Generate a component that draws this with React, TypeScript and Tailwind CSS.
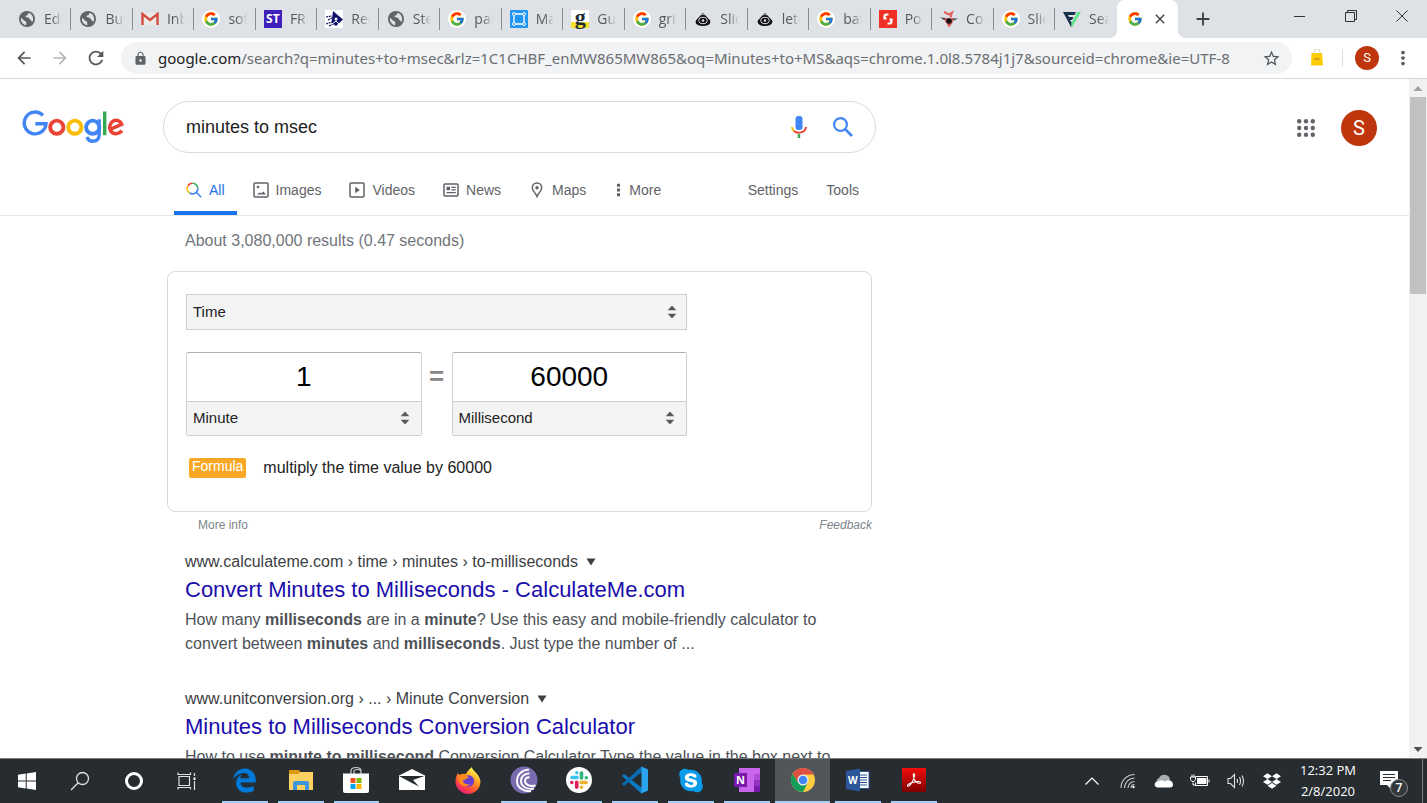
import React from "react";
import { FcGoogle } from "react-icons/fc";
import { FaDropbox, FaEdgeLegacy, FaSkype } from "react-icons/fa";
import { MdLock, MdStarBorder, MdRefresh, MdArrowBack, MdArrowForward, MdMoreVert, MdClose, MdAdd } from "react-icons/md";

const ui = "font-['Open_Sans','Noto_Sans',sans-serif]";

/* ---------- favicons ---------- */

const Globe = () => (
  <svg viewBox="0 0 16 16" className="size-4">
    <circle cx="8" cy="8" r="8" fill="#5f6368" />
    <path d="M2 6.800l2.600 2.200c.5 1.300 2 1 2.500 1.800.4.800-.2 2 .3 3.400C4 14 1.300 10.500 2 6.800z" fill="#dee1e6" />
    <path d="M9.600 2c-1 .6-.3 1.700-1.500 2.200-1 .2-1.700.2-1.600 1.400.1 1 2 .9 3 1.200 1.300.4 1.200 2 2.300 2.500.9.400 1.200 1.300 1 2.300 1.600-2 1.900-5 .3-7.200C12.200 3.200 11 2.300 9.600 2z" fill="#dee1e6" />
  </svg>
);

const GoogleG = () => (
  <span className="flex size-[18px] items-center justify-center rounded-full bg-white">
    <FcGoogle className="size-4" />
  </span>
);

const Gmail = () => (
  <svg viewBox="0 0 18 14" className="h-[14px] w-[18px]">
    <path d="M1 1h16v12H1z" fill="#e9e9e9" />
    <path d="M1.500 13V2L9 8l7.500-6v11" fill="none" stroke="#d54b3d" strokeWidth="2.400" />
  </svg>
);

const St = () => (
  <span className="flex size-[18px] items-center justify-center bg-[#3f20ba] text-[12px] leading-none font-bold text-white">ST</span>
);

const Diamond = () => (
  <svg viewBox="0 0 18 18" className="size-[18px]">
    <path d="M0 0h18v18H0z" fill="#fff" />
    <path d="M8 1l10 8.500L11 16 6.500 13z" fill="#11116b" />
    <path d="M1 7l6-1M3 10l4-2M1 14l6-2M4 16l4-2" stroke="#11116b" strokeWidth="1.200" strokeDasharray="2 .8" />
    <circle cx="11" cy="9" r="1.500" fill="#fff" />
    <path d="M7 14l4-3 3 3" stroke="#fff" fill="none" />
  </svg>
);

const Marquee = () => (
  <svg viewBox="0 0 18 18" className="size-[18px]">
    <rect width="18" height="18" rx="1" fill="#2196f3" />
    <path d="M4 4h10v10H4z" fill="none" stroke="#fff" strokeWidth="1.300" />
    <g fill="#2196f3" stroke="#fff">
      <circle cx="4" cy="4" r="1.500" />
      <circle cx="14" cy="4" r="1.500" />
      <circle cx="4" cy="14" r="1.500" />
      <circle cx="14" cy="14" r="1.500" />
    </g>
  </svg>
);

const Guru = () => (
  <span className="flex size-[18px] items-center justify-center bg-linear-to-b from-white from-65% to-[#f5e02a] to-65% pb-1 font-['Liberation_Serif',serif] text-[22px] leading-none font-bold text-[#222c35]">
    g
  </span>
);

const Eye = () => (
  <svg viewBox="0 0 18 18" className="size-[18px]">
    <path d="M9 4.500L3 11c-1.500 5 13.500 5 12 0z" fill="#111" stroke="#111" strokeWidth="2.500" strokeLinejoin="round" />
    <ellipse cx="9" cy="10.500" rx="4.200" ry="3.200" fill="none" stroke="#dee1e6" />
    <circle cx="9" cy="10.500" r="1.200" fill="#dee1e6" />
    <path d="M7 5q2-1.500 4 0" fill="none" stroke="#dee1e6" strokeWidth=".7" />
  </svg>
);

const RedTile = () => (
  <svg viewBox="0 0 18 18" className="size-[18px]">
    <path d="M0 0h18v18H0z" fill="#ef3124" />
    <path d="M9.500 4.500H7.500A2 2 0 0 0 5.500 6.500V8.300h2M8.500 13.500h2a2 2 0 0 0 2-2V9.700h-2" fill="none" stroke="#fff" strokeWidth="2.200" />
  </svg>
);

const Ninja = () => (
  <svg viewBox="0 0 18 18" className="size-[18px]">
    <path d="M3 8l11 .5-2 5-3 4-3-5z" fill="#d9595a" />
    <path d="M4 2l5 2.500 3-2-1.500 5" fill="none" stroke="#e2605e" strokeWidth="2" />
    <path d="M0 7.500l6 .5-2 2zM12 8.500h6l-4 2z" fill="#444" />
    <circle cx="9" cy="11" r="2.800" fill="#111" />
  </svg>
);

const Shield = () => (
  <svg viewBox="0 0 18 18" className="size-[18px]">
    <path d="M0 2h13L11.500 5H5l1 2h4.500L9 10H7l2.500 4L8 17z" fill="#17324d" />
    <path d="M14.500 2H18L9 17l-1-3z" fill="#5be584" />
  </svg>
);

const tabs: [React.FC, string][] = [
  [Globe, "Editor"],
  [Globe, "Bugs"],
  [Gmail, "Inbox"],
  [GoogleG, "soft"],
  [St, "FREE"],
  [Diamond, "Reco"],
  [Globe, "Step"],
  [GoogleG, "pain"],
  [Marquee, "Mar"],
  [Guru, "Guru"],
  [GoogleG, "grid"],
  [Eye, "Slice"],
  [Eye, "letc"],
  [GoogleG, "bath"],
  [RedTile, "Poly"],
  [Ninja, "Cod"],
  [GoogleG, "Slice"],
  [Shield, "Sear"],
];

function TabStrip() {
  return (
    <div className="flex h-[38px] shrink-0 bg-[#dee1e6] pl-[10px]">
      <div role="tablist" className="grid min-w-0 max-w-[1168px] flex-1 grid-cols-[repeat(19,minmax(0,1fr))]">
        {tabs.map(([Icon, label], i) => (
          <button key={i} role="tab" aria-selected="false" className="flex min-w-0 items-center">
            <span className={`flex h-[22px] min-w-0 flex-1 items-center gap-2 pr-2 pl-2 ${i < tabs.length - 1 ? "border-r border-[#8a8d91]" : ""}`}>
              <span className="flex w-[18px] shrink-0 justify-center">
                <Icon />
              </span>
              <span className="min-w-0 flex-1 overflow-hidden text-left text-[14px] leading-5 whitespace-nowrap text-[#55585c] [mask-image:linear-gradient(to_right,black_45%,transparent)]">
                {label}
              </span>
            </span>
          </button>
        ))}
        <div className="relative flex min-w-0 items-center justify-between rounded-t-lg bg-white px-[10px]">
          <span className="absolute bottom-0 -left-2 size-2 bg-[radial-gradient(circle_at_0_0,transparent_8px,white_8px)]" />
          <span className="absolute -right-2 bottom-0 size-2 bg-[radial-gradient(circle_at_100%_0,transparent_8px,white_8px)]" />
          <button role="tab" aria-selected="true" aria-label="minutes to msec - Google Search">
            <FcGoogle className="size-4" />
          </button>
          <button aria-label="Close tab">
            <MdClose className="size-4 text-[#3c4043]" />
          </button>
        </div>
      </div>
      <button aria-label="New tab" className="flex w-[50px] items-center justify-center">
        <MdAdd className="size-[22px] text-[#3c4043]" />
      </button>
      <div className="ml-auto flex h-8">
        <button aria-label="Minimize" className="flex w-[51px] items-center justify-center">
          <span className="h-px w-[11px] bg-[#333]" />
        </button>
        <button aria-label="Restore" className="flex w-[51px] items-center justify-center">
          <svg viewBox="0 0 12 12" className="size-3" fill="none" stroke="#333">
            <path d="M.5 2.500h9v9h-9zM2.500 2.500v-2h9v9h-2" />
          </svg>
        </button>
        <button aria-label="Close" className="flex w-[51px] items-center justify-center">
          <svg viewBox="0 0 12 12" className="size-3" fill="none" stroke="#333">
            <path d="M.5.5l11 11M11.500.5l-11 11" />
          </svg>
        </button>
      </div>
    </div>
  );
}

function Toolbar() {
  return (
    <div className="flex h-[41px] shrink-0 items-center border-b border-[#d5d7da] bg-white pr-[13px] pl-[6px]">
      <button aria-label="Back" className="flex w-9 justify-center">
        <MdArrowBack className="size-5 text-[#55585c]" />
      </button>
      <button aria-label="Forward" className="flex w-9 justify-center">
        <MdArrowForward className="size-5 text-[#b5b7ba]" />
      </button>
      <button aria-label="Reload" className="flex w-9 justify-center">
        <MdRefresh className="size-[22px] text-[#55585c]" />
      </button>
      <div className="ml-[7px] flex h-8 min-w-0 flex-1 items-center rounded-full bg-[#f1f3f4] pr-[11px] pl-3">
        <MdLock className="size-[15px] shrink-0 text-[#5f6368]" />
        <div
          role="textbox"
          aria-label="Address and search bar"
          tabIndex={0}
          className="ml-[10px] min-w-0 flex-1 overflow-hidden font-['Noto_Sans',sans-serif] text-[15px] leading-6 whitespace-nowrap text-[#6b6e72]"
        >
          <span className="text-[#202124]">google.com</span>
          /search?q=minutes+to+msec&amp;rlz=1C1CHBF_enMW865MW865&amp;oq=Minutes+to+MS&amp;aqs=chrome.1.0l8.5784j1j7&amp;sourceid=chrome&amp;ie=UTF-8
        </div>
        <button aria-label="Bookmark this tab">
          <MdStarBorder className="size-[19px] text-[#55585c]" />
        </button>
      </div>
      <button aria-label="Shopping extension" className="ml-4 flex w-[18px] justify-center">
        <svg viewBox="0 0 14 18" className="h-[18px] w-[14px]">
          <path d="M4 5V3a2.500 2.500 0 0 1 6 0v2" fill="none" stroke="#d8d2b8" />
          <path d="M1.500 4H12l1 12.500H1z" fill="#fbcb05" />
          <path d="M4.500 10h5" stroke="#c47b2a" strokeWidth="1.200" />
        </svg>
      </button>
      <span className="ml-4 h-[18px] w-px bg-[#dcdde0]" />
      <button aria-label="Profile" className="ml-3 flex size-6 items-center justify-center rounded-full bg-[#bf360c] font-[Roboto,sans-serif] text-[13px] text-white">
        S
      </button>
      <button aria-label="Menu" className="ml-[13px]">
        <MdMoreVert className="size-[22px] text-[#55585c]" />
      </button>
    </div>
  );
}

/* ---------- page ---------- */

const GoogleLogo = () => (
  <svg role="img" aria-label="Google" viewBox="0 0 102 34" className="h-[34px] w-[102px]" fill="none" strokeWidth="3.900">
    <path d="M21 5.400A10.900 10.900 0 1 0 24 13.800H13.300" stroke="#4285f4" strokeWidth="3.400" />
    <circle cx="34.800" cy="17.200" r="6.600" stroke="#ea4335" />
    <circle cx="52.800" cy="17.200" r="6.600" stroke="#fbbc05" />
    <circle cx="70.700" cy="17.200" r="6.600" stroke="#4285f4" />
    <path d="M77.200 9.200v15.300c0 8-9.700 8.900-12.300 2.500" stroke="#4285f4" strokeWidth="3.400" />
    <path d="M82.700 1.500V25.200" stroke="#34a853" strokeWidth="3.400" />
    <path d="M88 19.300L99.700 14.400C98.100 9.900 93.500 9.500 90.700 11.400C87.600 13.500 86.800 18 88.700 21C91.200 24.800 97 24.600 99.800 20.600" stroke="#ea4335" strokeWidth="3.500" />
  </svg>
);

const IconAll = () => (
  <svg viewBox="0 0 16 16" className="size-4" fill="none" strokeWidth="1.600">
    <path d="M6.500 1.200a5.300 5.300 0 0 1 5.300 5.300" stroke="#34a853" />
    <path d="M1.900 3.900a5.300 5.300 0 0 0 1.700 7.100" stroke="#fbbc05" />
    <path d="M1.900 3.900A5.300 5.300 0 0 1 6.500 1.200" stroke="#ea4335" />
    <path d="M3.600 11a5.300 5.300 0 0 0 8.200-4.500M10.200 10.200l5 5" stroke="#4285f4" />
  </svg>
);
const IconImages = () => (
  <svg viewBox="0 0 16 16" className="size-4" fill="#5f6368">
    <rect x="1" y="1" width="14" height="14" rx="1" fill="none" stroke="#5f6368" strokeWidth="1.500" />
    <circle cx="5" cy="5" r="1.300" />
    <path d="M4 12.500l2.500-2 1.800.8 2-1.800 2.700 3z" />
  </svg>
);
const IconVideos = () => (
  <svg viewBox="0 0 16 16" className="size-4" fill="#5f6368">
    <rect x="1" y="1" width="14" height="14" rx="1" fill="none" stroke="#5f6368" strokeWidth="1.500" />
    <path d="M6.200 4.800v6.400L10.800 8z" />
  </svg>
);
const IconNews = () => (
  <svg viewBox="0 0 16 16" className="size-4" fill="#5f6368">
    <rect x="1" y="2" width="14" height="12" rx="1" fill="none" stroke="#5f6368" strokeWidth="1.500" />
    <path d="M3.500 4.800h3.500v3.500H3.500zM8.300 4.800h4.500V6H8.300zM8.300 7.200h4.500v1.200H8.300zM3.500 10h9.300v1.300H3.500z" />
  </svg>
);
const IconMaps = () => (
  <svg viewBox="-2 0 16 16" className="size-4" fill="none" stroke="#5f6368" strokeWidth="1.500">
    <path d="M6 14.500C5 11.500 1.300 9 1.300 5.700a4.700 4.700 0 0 1 9.400 0C10.700 9 7 11.500 6 14.500z" />
    <circle cx="6" cy="5.800" r="1" fill="#5f6368" />
  </svg>
);
const IconMore = () => (
  <svg viewBox="0 0 8 14" className="h-[14px] w-2" fill="#5f6368">
    <path d="M3 .800h3v3H3zM3 5.500h3v3H3zM3 10.200h3v3H3z" />
  </svg>
);

const navItems: [React.FC, string][] = [
  [IconImages, "Images"],
  [IconVideos, "Videos"],
  [IconNews, "News"],
  [IconMaps, "Maps"],
  [IconMore, "More"],
];

function Header() {
  return (
    <header className="border-b border-[#e4e5e8]">
      <div className="flex items-center pt-[22px] pr-8 pl-[22px]">
        <a href="#home" className="w-[141px] shrink-0">
          <GoogleLogo />
        </a>
        <form className="flex h-[52px] w-full max-w-[713px] items-center rounded-full border border-[#d9dbe0] pr-[21px] pl-[22px]">
          <input aria-label="Search" defaultValue="minutes to msec" className="min-w-0 flex-1 bg-transparent text-[18px] leading-6 text-[#222] outline-none" />
          <button type="button" aria-label="Search by voice">
            <svg viewBox="0 0 18 24" className="h-6 w-[18px]" fill="none" strokeWidth="2">
              <rect x="5.500" y="1" width="7" height="14" rx="3" fill="#4285f4" />
              <path d="M2 12q.3 2.600 2 4" stroke="#fbbc05" />
              <path d="M4 16c3 3 11.500 2 12-4" stroke="#ea4335" />
              <path d="M9 19v4" stroke="#34a853" strokeWidth="2.400" />
            </svg>
          </button>
          <button type="submit" aria-label="Google Search" className="ml-6">
            <svg viewBox="0 0 22 22" className="size-[22px]" fill="none" stroke="#4285f4" strokeWidth="2.200">
              <circle cx="8.500" cy="8.500" r="6.400" />
              <path d="M13 13l7 7" strokeWidth="2.600" />
            </svg>
          </button>
        </form>
        <div className="ml-auto flex items-center gap-[26px] pt-[2px]">
          <button aria-label="Google apps">
            <svg viewBox="0 0 18 18" className="size-[18px]" fill="#5f6368">
              {[2.2, 9, 15.8].map((y) => [2.2, 9, 15.8].map((x) => <circle key={`${x}-${y}`} cx={x} cy={y} r="2.200" />))}
            </svg>
          </button>
          <button aria-label="Google Account" className="flex size-9 items-center justify-center rounded-full bg-[#bf360c] font-[Roboto,sans-serif] text-[20px] text-white">
            S
          </button>
        </div>
      </div>
      <nav className="mt-[13px] flex max-w-[871px] items-stretch pl-[174px] text-[14px] leading-5 text-[#5f6368]">
        <a href="#all" className="flex h-[49px] items-center gap-[7px] border-b-4 border-[#1a73e8] px-3 pt-[2px] text-[#1a73e8]">
          <IconAll />
          All
        </a>
        {navItems.map(([Icon, label]) => (
          <a key={label} href={`#${label}`} className="ml-1 flex items-center gap-[7px] px-3 pb-[2px]">
            <Icon />
            {label}
          </a>
        ))}
        <div className="ml-auto flex items-center gap-7 pr-3 pb-[2px]">
          <a href="#settings">Settings</a>
          <a href="#tools">Tools</a>
        </div>
      </nav>
    </header>
  );
}

const Arrows = ({ className }: { className: string }) => (
  <svg viewBox="0 0 10 14" className={`pointer-events-none absolute h-[14px] w-[10px] ${className}`} fill="#5a5a5a">
    <path d="M5 .5l4.300 4.700H.7zM5 13.500l4.300-4.700H.7z" />
  </svg>
);

function Unit({ value, unit, label }: { value: string; unit: string; label: string }) {
  return (
    <div className="flex-1 rounded-xs border border-t-[#b0b0b0] border-[#cfcfcf]">
      <input aria-label={`${label} value`} defaultValue={value} className="block h-12 w-full text-center text-[28px] leading-8 text-black outline-none" />
      <div className="relative border-t border-[#cfcfcf]">
        <select aria-label={`${label} unit`} className="block h-[33px] w-full appearance-none bg-[#f4f4f4] px-[6px] text-[15px] text-[#222]">
          <option>{unit}</option>
        </select>
        <Arrows className="top-[9px] right-[11px]" />
      </div>
    </div>
  );
}

function Converter() {
  return (
    <section className="w-full max-w-[705px]">
      <div className="h-[241px] rounded-lg border border-[#d9dbe0] px-[18px] pt-[22px]">
        <div className="max-w-[501px]">
          <div className="relative">
            <select aria-label="Quantity" className="block h-9 w-full appearance-none border border-[#cfcfcf] bg-[#f4f4f4] px-[6px] text-[15px] text-[#222]">
              <option>Time</option>
            </select>
            <Arrows className="top-[11px] right-[10px]" />
          </div>
          <div className="mt-[22px] flex">
            <Unit value="1" unit="Minute" label="From" />
            <span className="w-[30px] pt-2 text-center text-[26px] leading-8 font-bold text-[#878787]">=</span>
            <Unit value="60000" unit="Millisecond" label="To" />
          </div>
          <div className="mt-[22px] flex items-center gap-[17px] pl-[3px] text-[#222]">
            <span className="h-5 rounded-xs bg-[#f9a825] px-[3px] text-[14px] leading-[17px] text-white">Formula</span>
            <span className="text-[16px] leading-5">multiply the time value by 60000</span>
          </div>
        </div>
      </div>
      <div className="flex h-[26px] items-center justify-between pl-[31px] text-[12px] leading-4 text-[#80868b]">
        <a href="#info">More info</a>
        <a href="#feedback" className="italic">
          Feedback
        </a>
      </div>
    </section>
  );
}

function Result({ cite, title, children }: { cite: string; title: string; children: React.ReactNode }) {
  return (
    <article className="mb-[31px]">
      <div className="flex items-center gap-2 text-[16px] leading-6 text-[#3c4043]">
        <cite className="not-italic">{cite}</cite>
        <button aria-label="Result options">
          <svg viewBox="0 0 10 8" className="h-2 w-[10px]" fill="#3c4043">
            <path d="M.5.500h9L5 7.500z" />
          </svg>
        </button>
      </div>
      <h3 className="mt-[2px] text-[22px] leading-[28px] text-[#1a0dab]">
        <a href="#result">{title}</a>
      </h3>
      <p className="mt-1 text-[16px] leading-6 text-[#4d5156]">{children}</p>
    </article>
  );
}

function Scrollbar() {
  return (
    <div className="flex w-[18px] shrink-0 flex-col items-center bg-[#f1f1f1]">
      <svg viewBox="0 0 18 18" className="size-[18px] shrink-0" fill="#a3a3a3">
        <path d="M4.500 12h9L9 7z" />
      </svg>
      <span className="h-[197px] w-4 bg-[#c1c1c1]" />
      <svg viewBox="0 0 18 18" className="mt-auto size-[18px] shrink-0" fill="#505050">
        <path d="M4.500 7h9L9 12z" />
      </svg>
    </div>
  );
}

/* ---------- taskbar ---------- */

const Win = () => (
  <svg viewBox="0 0 20 20" className="size-5" fill="#fff">
    <path d="M1 3.800l7.700-1.200v6.900H1zM9.700 2.400L19 1v8.500H9.700zM1 10.500h7.700v6.900L1 16.200zM9.700 10.500H19V19l-9.300-1.400z" />
  </svg>
);
const Search = () => (
  <svg viewBox="0 0 20 20" className="size-5" fill="none" stroke="#dfe0e0" strokeWidth="1.300">
    <circle cx="12.500" cy="7.500" r="6" />
    <path d="M8.200 11.800L1 19" />
  </svg>
);
const Cortana = () => <span className="size-[18px] rounded-full border-[3px] border-white" />;
const TaskView = () => (
  <svg viewBox="0 0 20 18" className="h-[18px] w-5" fill="none" stroke="#dfe0e0" strokeWidth="1.200">
    <path d="M2 4.500h10.500v9H2zM1 .5v2h12.500v-2M1 17.500v-2h12.500v2M17.500 1v3M17.500 9v9" />
    <path d="M16.500 5.500h2v2.500h-2z" fill="#fff" stroke="none" />
  </svg>
);
const Edge = () => <FaEdgeLegacy className="size-[25px] text-[#0078d7]" />;
const Folder = () => (
  <svg viewBox="0 0 26 22" className="h-[22px] w-[26px]">
    <path d="M1 1h10l2 3h11v4H1z" fill="#dc9a12" />
    <path d="M1 5h9l2-2h13v18H1z" fill="#fdd262" />
    <path d="M5 21v-7q0-2 2-2h12q2 0 2 2v7h-4v-5H9v5z" fill="#3b94dc" />
  </svg>
);
const Store = () => (
  <svg viewBox="0 0 28 28" className="size-7">
    <path d="M9 8V5q0-3.500 5-3.500T19 5v3M12 8V5.500q0-2 3.500-2T19 6" fill="none" stroke="#c7c9ca" strokeWidth="1.200" />
    <path d="M1 7.500h26V25q0 2-2 2H3q-2 0-2-2z" fill="#fff" />
    <path d="M8.500 12h5v5h-5z" fill="#f25022" />
    <path d="M14.500 12h5v5h-5z" fill="#7fba00" />
    <path d="M8.500 18h5v5h-5z" fill="#00a4ef" />
    <path d="M14.500 18h5v5h-5z" fill="#ffb900" />
  </svg>
);
const Mail = () => (
  <svg viewBox="0 0 28 24" className="h-6 w-7">
    <path d="M1 7.500L14 1l13 6.500V22H1z" fill="#fff" />
    <path d="M1 8h25.500L15 12l6 6.500L12 14z" fill="#262c30" />
  </svg>
);
const Firefox = () => (
  <svg viewBox="0 0 26 27" className="h-[27px] w-[26px]">
    <defs>
      <linearGradient id="fx" x1=".8" y1="0" x2=".2" y2="1">
        <stop offset=".1" stopColor="#fff44f" />
        <stop offset=".4" stopColor="#ff9a1f" />
        <stop offset=".7" stopColor="#ff4a3c" />
        <stop offset="1" stopColor="#e31587" />
      </linearGradient>
    </defs>
    <path d="M3 6q.5 2 2 2 3-2 6-1c1-2 3-5 6-7 0 4 7 6 8.500 14 0 8-6 13-12.500 13S.5 21 .5 15c0-4 1-7 2.500-9z" fill="url(#fx)" />
    <circle cx="13.500" cy="14" r="5.700" fill="#6a3fd0" />
    <path d="M4 8c4-2 8 0 10 3-3 0-3 2-6 2 0 4 4 5 7 4-3 4-11 2-12-4z" fill="#ff8a1e" />
  </svg>
);
const Torrent = () => (
  <svg viewBox="0 0 28 28" className="size-7">
    <circle cx="14" cy="14" r="13.500" fill="#7a6bb0" />
    <g fill="none" stroke="#fff" strokeWidth="1.900">
      <path d="M25.500 19.500c-6 1.500-10.500-1-10.500-4.500 0-2.500 1.800-3.800 4.500-3.800" />
      <path d="M24 22.500c-7.500 1.500-13-2.500-13-7.500 0-4.500 3.500-7.600 8.500-7.600" />
      <path d="M21 25.200C13.500 26 7 21.500 7 15S12 3.800 19 3.600" />
    </g>
  </svg>
);
const Slack = () => (
  <svg viewBox="0 0 26 26" className="size-[26px]">
    <circle cx="13" cy="13" r="13" fill="#fff" />
    <g strokeWidth="3.600" strokeLinecap="round">
      <path d="M6 10.500h5M10.800 5.700h0" stroke="#36c5f0" />
      <path d="M15.500 6v5M20.300 10.700h0" stroke="#2eb67d" />
      <path d="M15.200 15.500h5M15.500 20.300h0" stroke="#ecb22e" />
      <path d="M10.700 15.300v5M5.800 15.500h0" stroke="#e01e5a" />
    </g>
  </svg>
);
const Code = () => (
  <svg viewBox="0 0 28 28" className="size-7">
    <path d="M1 10l2-2 18 14v6z" fill="#0a7cc8" />
    <path d="M1 18l2 2L21 6V0z" fill="#0b6ab0" />
    <path d="M20.500.500L27 3.500v21l-6.500 3z" fill="#2ba4f0" />
  </svg>
);
const Skype = () => (
  <span className="relative flex size-[26px] items-center justify-center">
    <span className="absolute inset-1 rounded-full bg-white" />
    <FaSkype className="relative size-[27px] text-[#0a9bea]" />
  </span>
);
const OneNote = () => (
  <svg viewBox="0 0 26 24" className="h-6 w-[26px]">
    <path d="M5 0h21v24H5z" fill="#ca64ea" />
    <path d="M20 6h6v6h-6z" fill="#ae4bd5" />
    <path d="M20 12h6v6h-6z" fill="#9332bf" />
    <path d="M20 18h6v6h-6z" fill="#7719aa" />
    <path d="M0 5h13v14H0z" fill="#7719aa" />
    <text x="6.500" y="16" textAnchor="middle" fontSize="11" fontWeight="700" fill="#fff">N</text>
  </svg>
);
const Chrome = () => (
  <svg viewBox="0 0 24 24" className="size-6">
    <circle cx="12" cy="12" r="12" fill="#ffcd40" />
    <path d="M12 6.600h10.700A12 12 0 0 0 1.600 6l5.700 8.700z" fill="#dd5144" />
    <path d="M1.600 6A12 12 0 0 0 12 24l4.700-9.300H7.300z" fill="#0f9d58" />
    <circle cx="12" cy="12" r="5.500" fill="#f1f1f1" />
    <circle cx="12" cy="12" r="4.300" fill="#4285f4" />
  </svg>
);
const Word = () => (
  <svg viewBox="0 0 24 24" className="size-6">
    <path d="M12 3.500h11v17H12z" fill="#fff" stroke="#2b579a" />
    <path d="M14 7h7M14 9.500h7M14 12h7M14 14.500h7M14 17h7" stroke="#2b579a" />
    <path d="M0 3l14-2.500v23L0 21z" fill="#2b579a" />
    <text x="6.800" y="15.800" textAnchor="middle" fontSize="10" fontWeight="700" fill="#fff">W</text>
  </svg>
);
const Acrobat = () => (
  <svg viewBox="0 0 24 24" className="size-6">
    <defs>
      <linearGradient id="ac" x1="0" y1="0" x2="0" y2="1">
        <stop offset="0" stopColor="#f30b0b" />
        <stop offset="1" stopColor="#7d0000" />
      </linearGradient>
    </defs>
    <path d="M0 0h24v24H0z" fill="url(#ac)" />
    <path d="M5.500 18c-1-1.500 5-4.500 11-4.500 3 0 2.500 2.300 0 1.700-3-.800-5-4.200-5.200-8.200 0-2 1.500-1.700 1.300.500C12 12 7.500 19.500 5.500 18z" fill="none" stroke="#fff" strokeWidth="1.100" />
  </svg>
);

const apps: [React.FC, string, string][] = [
  [Edge, "Microsoft Edge", "open"],
  [Folder, "File Explorer", "open"],
  [Store, "Microsoft Store", "open"],
  [Mail, "Mail", ""],
  [Firefox, "Firefox", ""],
  [Torrent, "BitTorrent", "open"],
  [Slack, "Slack", "open"],
  [Code, "Visual Studio Code", "open"],
  [Skype, "Skype", "open"],
  [OneNote, "OneNote", "open"],
  [Chrome, "Google Chrome", "active"],
  [Word, "Word", "open"],
  [Acrobat, "Acrobat Reader", "open"],
];

const system: [React.FC, string][] = [
  [Win, "Start"],
  [Search, "Search Windows"],
  [Cortana, "Cortana"],
  [TaskView, "Task View"],
];

function Taskbar() {
  return (
    <footer className="flex h-[45px] shrink-0 border-t border-[#7b7f82] bg-[#262c30] text-white">
      <div className="flex w-[214px] shrink-0">
        {system.map(([Icon, name]) => (
          <button key={name} aria-label={name} className="flex flex-1 items-center justify-center">
            <Icon />
          </button>
        ))}
      </div>
      <div className="ml-[3px] grid min-w-0 max-w-[725px] flex-1 grid-cols-[repeat(13,minmax(0,1fr))]">
        {apps.map(([Icon, name, state]) => (
          <button key={name} aria-label={name} className={`flex flex-col items-center ${state === "active" ? "bg-[#50565a]" : "px-[5px]"}`}>
            <span className="flex flex-1 items-center">
              <Icon />
            </span>
            <span className={`h-[2px] w-full ${state ? "bg-[#a3cdf8]" : ""}`} />
          </button>
        ))}
      </div>
      <div className="ml-auto flex shrink-0 items-center">
        <button aria-label="Show hidden icons" className="flex w-9 justify-center">
          <svg viewBox="0 0 14 8" className="h-2 w-[14px]" fill="none" stroke="#fff" strokeWidth="1.200">
            <path d="M.5 7.500L7 1l6.500 6.500" />
          </svg>
        </button>
        <button aria-label="Network" className="flex w-9 justify-center">
          <svg viewBox="0 0 16 16" className="size-4" fill="none" stroke="#c9cbcc" strokeWidth="1.100">
            <path d="M1 15A13.500 13.500 0 0 1 14.500 1.500M4.500 15A10 10 0 0 1 14.500 5M8 15a6.500 6.500 0 0 1 6.500-6.500M11 15a3.500 3.500 0 0 1 3.500-3.500" />
            <circle cx="13.500" cy="14" r="1.200" fill="#fff" stroke="none" />
          </svg>
        </button>
        <button aria-label="OneDrive" className="flex w-9 justify-center">
          <svg viewBox="0 0 20 14" className="h-[14px] w-5">
            <path d="M4 11a4 4 0 0 1 1-7 6 6 0 0 1 11 1l-2 6z" fill="#a9acae" />
            <path d="M4 13.500c-4.500 0-4.500-6 0-6 2.500-2 5-1.500 7 0 3-2.500 8-1 8 3 0 2-1 3-3 3z" fill="#fff" />
          </svg>
        </button>
        <button aria-label="Battery" className="flex w-9 justify-center">
          <svg viewBox="0 0 20 14" className="h-[14px] w-5" fill="none" stroke="#fff">
            <path d="M5.500 2.500h12v9h-12V8.500M19 5.500v3M3 8.500V11h2.500M2 .5v2.500M4 .5v2.500M.5 3h5v2.500L4 7.500H2L.5 5.500z" />
            <path d="M7 4h9.500v6H7z" fill="#fff" stroke="none" />
          </svg>
        </button>
        <button aria-label="Volume" className="flex w-9 justify-center">
          <svg viewBox="0 0 18 16" className="h-4 w-[18px]" fill="none" stroke="#dfe0e0" strokeWidth="1.100">
            <path d="M1 5.500h2.500l4-4v13l-4-4H1zM10 6q1 2 0 4M12.500 4q2 4 0 8M15 2.500q3 5.500 0 11" />
          </svg>
        </button>
        <button aria-label="Dropbox" className="flex w-9 justify-center">
          <FaDropbox className="size-[18px]" />
        </button>
        <button className="w-[76px] text-center text-[13px] leading-[21px]">
          12:32 PM
          <br />
          2/8/2020
        </button>
        <button aria-label="Notifications" className="relative ml-[14px] h-8 w-7">
          <svg viewBox="0 0 18 20" className="h-5 w-[18px]">
            <path d="M0 0h18v14h-6v5l-5-5H0z" fill="#fff" />
            <path d="M3 3.500h12M3 6.500h12M3 9.500h8" stroke="#262c30" />
          </svg>
          <span className="absolute right-0 bottom-0 flex size-[18px] items-center justify-center rounded-full border border-[#888c8f] bg-[#33383c] text-[12px] leading-none font-semibold">
            7
          </span>
        </button>
        <span className="mr-1 ml-[14px] h-full w-px bg-[#7b7f82]" />
      </div>
    </footer>
  );
}

export default function App() {
  return (
    <div className={`flex h-screen flex-col overflow-hidden bg-white ${ui}`}>
      <TabStrip />
      <Toolbar />
      <div className="flex min-h-0 flex-1">
        <main className="min-w-0 flex-1 overflow-hidden font-['Liberation_Sans',Arial,sans-serif]">
          <Header />
          <div className="pl-[167px]">
            <p className="pt-[15px] pl-[18px] text-[16px] leading-5 text-[#70757a]">About 3,080,000 results (0.47 seconds)</p>
            <div className="mt-5">
              <Converter />
            </div>
            <div className="mt-3 max-w-[687px] pl-[18px]">
              <Result cite="www.calculateme.com › time › minutes › to-milliseconds" title="Convert Minutes to Milliseconds - CalculateMe.com">
                How many <b>milliseconds</b> are in a <b>minute</b>? Use this easy and mobile-friendly calculator to convert between <b>minutes</b> and <b>milliseconds</b>. Just type the number of ...
              </Result>
              <Result cite="www.unitconversion.org › ... › Minute Conversion" title="Minutes to Milliseconds Conversion Calculator">
                How to use <b>minute to millisecond</b> Conversion Calculator Type the value in the box next to
              </Result>
            </div>
          </div>
        </main>
        <Scrollbar />
      </div>
      <Taskbar />
    </div>
  );
}
